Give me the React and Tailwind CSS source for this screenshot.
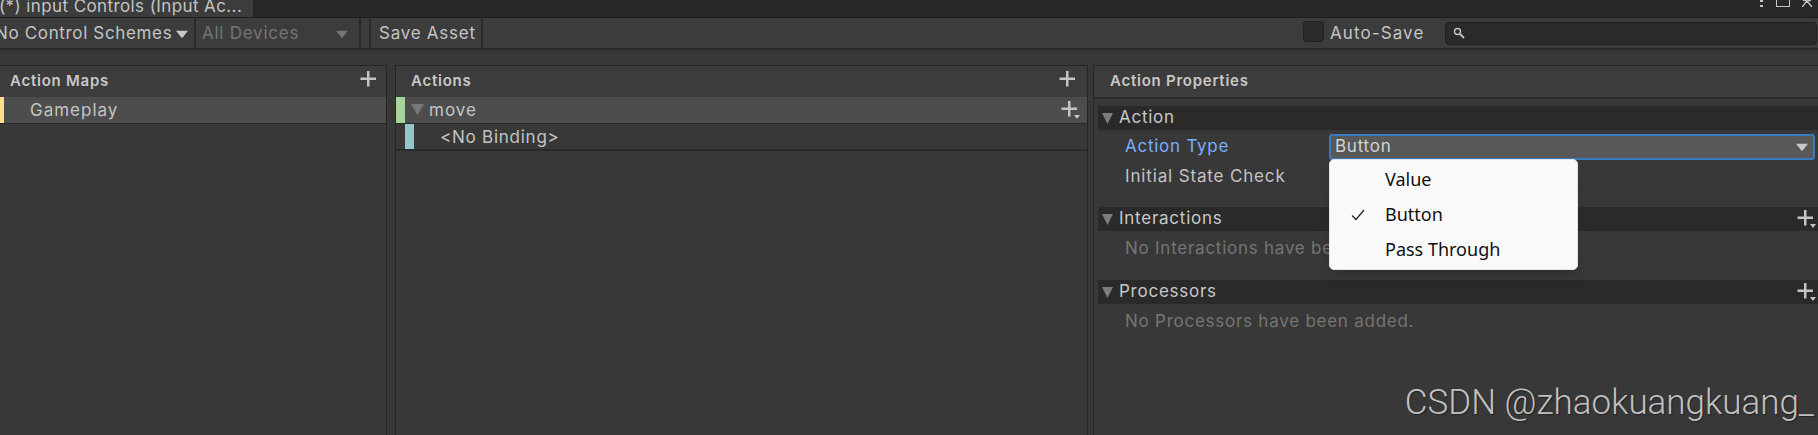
import React from "react";

const Caret = ({ className = "" }) => (
  <svg viewBox="0 0 12 12" preserveAspectRatio="none" className={className}>
    <path d="M0 1h12L6 11z" fill="currentColor" />
  </svg>
);

const PlusIcon = ({ menu = false }) => (
  <svg width="20" height="20" viewBox="0 0 20 20" className="text-[#c4c4c4]">
    <path d="M8 1h2.500v6.500H17V10h-6.500v6.500H8V10H1.500V7.500H8z" fill="currentColor" />
    {menu && <path d="M14 15h6l-3 4z" fill="currentColor" />}
  </svg>
);

const PanelHeader = ({ title, action, padLeft = "pl-[10px]", padRight = "pr-[9px]" }) => (
  <div className={`h-[31px] shrink-0 flex items-center justify-between ${padLeft} ${padRight} bg-[#3c3c3c] text-[15px] font-semibold text-[#c8c8c8]`}>
    <span>{title}</span>
    {action && <div className="pb-[4px]">{action}</div>}
  </div>
);

const SectionBar = ({ title, add }) => (
  <div className="h-[24px] ml-[4px] flex items-center justify-between bg-[#2a2a2a] pr-[2px]">
    <div className="flex items-center">
      <Caret className="w-[11px] h-[13px] ml-[4px] mr-[6px] text-[#7c7c7c]" />
      <span className="text-[#c8c8c8]">{title}</span>
    </div>
    {add && <PlusIcon menu />}
  </div>
);

export default function App() {
  return (
    <div className="w-[1818px] h-[435px] overflow-hidden flex flex-col bg-[#383838] text-[17px] tracking-[0.75px] text-[#c4c4c4] font-['Inter',sans-serif]">
      {/* window tab strip */}
      <div className="h-[18px] shrink-0 flex justify-between bg-[#282828] border-b border-[#1e1e1e]">
        <div className="w-[253px] h-[17px] bg-[#3c3c3c] overflow-hidden flex items-end">
          <span className="whitespace-nowrap -ml-[1px] leading-[22px] tracking-[0.4px]">(*) input Controls (Input Ac...</span>
        </div>
        <div className="flex items-start gap-[12px] pr-0 w-[58px] overflow-hidden">
          <svg width="4" height="9" viewBox="0 0 4 9" className="shrink-0">
            <rect x="0" y="0" width="3" height="2" fill="#c4c4c4" />
            <rect x="0" y="5" width="3" height="2" fill="#c4c4c4" />
          </svg>
          <div className="w-[14px] h-[7px] shrink-0 border-x border-b border-[#c4c4c4]" />
          <svg width="12" height="7" viewBox="0 0 12 7" className="shrink-0">
            <path d="M0 7l5-6 5 6M1 0l4 1 4-1" stroke="#c4c4c4" strokeWidth="1.300" fill="none" />
          </svg>
        </div>
      </div>

      {/* toolbar */}
      <div className="h-[32px] shrink-0 flex items-center bg-[#3c3c3c] border-b-2 border-[#2a2a2a] pr-[1px]">
        <div className="w-[196px] h-full shrink-0 flex items-center justify-between border-r-2 border-[#2a2a2a] pr-[6px] pt-[2px] overflow-hidden">
          <span className="whitespace-nowrap -ml-[5px] tracking-[0.65px]">No Control Schemes</span>
          <Caret className="w-[12px] h-[9px] text-[#c8c8c8]" />
        </div>
        <div className="w-[163px] h-full shrink-0 flex items-center justify-between border-r-2 border-[#2a2a2a] pl-[4px] pr-[11px] pt-[2px] ml-[2px] text-[#757575]">
          <span>All Devices</span>
          <Caret className="w-[12px] h-[9px]" />
        </div>
        <div className="w-[10px] h-full shrink-0 border-r-2 border-[#2a2a2a]" />
        <div className="w-[110px] h-full shrink-0 flex items-center border-r-2 border-[#2a2a2a] pl-[6px] pt-[2px] ml-[2px]">
          Save Asset
        </div>
        <div className="flex-1" />
        <div className="w-[21px] h-[21px] rounded-[3px] bg-[#2b2b2b] border border-[#232323] mb-[4px]" />
        <span className="ml-[6px] w-[115px] pt-[2px] tracking-[1.1px]">Auto-Save</span>
        <div className="w-[372px] h-[23px] flex items-center pl-[7px] rounded-[4px] bg-[#2a2a2a] border border-[#1f1f1f]">
          <svg width="12" height="12" viewBox="0 0 12 12">
            <circle cx="4.500" cy="4.500" r="3" stroke="#c4c4c4" strokeWidth="1.400" fill="none" />
            <path d="M7 7l4 4" stroke="#c4c4c4" strokeWidth="1.800" />
          </svg>
        </div>
      </div>

      {/* panels */}
      <div className="flex-1 flex pt-[15px] min-h-0">
        <div className="w-[387px] shrink-0 flex flex-col border-t border-r border-[#262626]">
          <PanelHeader title="Action Maps" action={<PlusIcon />} padRight="pr-[7px]" />
          <div className="h-[27px] flex items-stretch bg-[#4d4d4d] border-b border-[#2a2a2a]">
            <div className="w-[4px] bg-[#fddf8a]" />
            <span className="ml-[26px] leading-[27px] tracking-[1px]">Gameplay</span>
          </div>
        </div>

        <div className="w-[693px] shrink-0 ml-[8px] flex flex-col border-x border-t border-[#262626]">
          <PanelHeader title="Actions" action={<PlusIcon />} padLeft="pl-[15px]" />
          <div className="h-[27px] flex items-stretch justify-between bg-[#4d4d4d] border-b border-[#2a2a2a] pr-[7px]">
            <div className="flex items-stretch">
              <div className="w-[9px] bg-[#a6d49b]" />
              <Caret className="w-[13px] h-[13px] mt-[6px] ml-[6px] text-[#777777]" />
              <span className="ml-[5px] leading-[27px] tracking-[1px]">move</span>
            </div>
            <div className="pt-[3px]"><PlusIcon menu /></div>
          </div>
          <div className="h-[27px] flex items-stretch border-b-2 border-[#2a2a2a]">
            <div className="w-[9px] ml-[9px] bg-[#96c4c8]" />
            <span className="ml-[26px] leading-[27px]">&lt;No Binding&gt;</span>
          </div>
        </div>

        <div className="flex-1 ml-[5px] flex flex-col border-l border-t border-[#262626]">
          <div className="border-b-2 border-[#2a2a2a]">
            <PanelHeader title="Action Properties" padLeft="pl-[16px]" />
          </div>
          <div className="pt-[7px] flex flex-col">
            <SectionBar title="Action" />
            <div className="h-[30px] mt-[2px] flex items-center relative">
              <span className="ml-[31px] w-[204px] text-[#7baefa]">Action Type</span>
              <div className="w-[486px] h-[26px] flex items-center justify-between rounded-[3px] bg-[#585858] border-2 border-[#3a79bb] pl-[4px] pr-[5px] text-[#d2d2d2]">
                <span>Button</span>
                <Caret className="w-[12px] h-[9px] text-[#c8c8c8]" />
              </div>
              {/* open dropdown menu */}
              <div className="absolute left-[235px] top-[27px] z-10 w-[249px] h-[111px] py-[2px] rounded-[5px] bg-[#f9f9f9] border border-[#e4e4e4] shadow-lg text-[#111111] tracking-normal font-['Noto_Sans',sans-serif] text-[18px]">
                {["Value", "Button", "Pass Through"].map((item) => (
                  <div key={item} className="h-[35px] flex items-center">
                    <div className="w-[55px] flex justify-center">
                      {item === "Button" && (
                        <svg width="14" height="12" viewBox="0 0 14 12">
                          <path d="M1 6.500l4 4L13 1" stroke="#222222" strokeWidth="1.200" fill="none" />
                        </svg>
                      )}
                    </div>
                    <span>{item}</span>
                  </div>
                ))}
              </div>
            </div>
            <div className="h-[30px] flex items-center pl-[31px] tracking-[0.85px]">Initial State Check</div>
            <div className="mt-[15px]"><SectionBar title="Interactions" add /></div>
            <div className="h-[35px] flex items-center pl-[31px] text-[#757575]">No Interactions have been added.</div>
            <div className="mt-[14px]"><SectionBar title="Processors" add /></div>
            <div className="h-[35px] flex items-center pl-[31px] text-[#757575]">No Processors have been added.</div>
          </div>
          <div className="flex-1 flex items-end justify-end pr-[4px] pb-[12px]">
            <span className="text-[35px] leading-[40px] tracking-normal text-[#c0c0c0] font-['Roboto',sans-serif] font-light [text-shadow:1px_1px_1px_#222222]">CSDN @zhaokuangkuang_</span>
          </div>
        </div>
      </div>
    </div>
  );
}
